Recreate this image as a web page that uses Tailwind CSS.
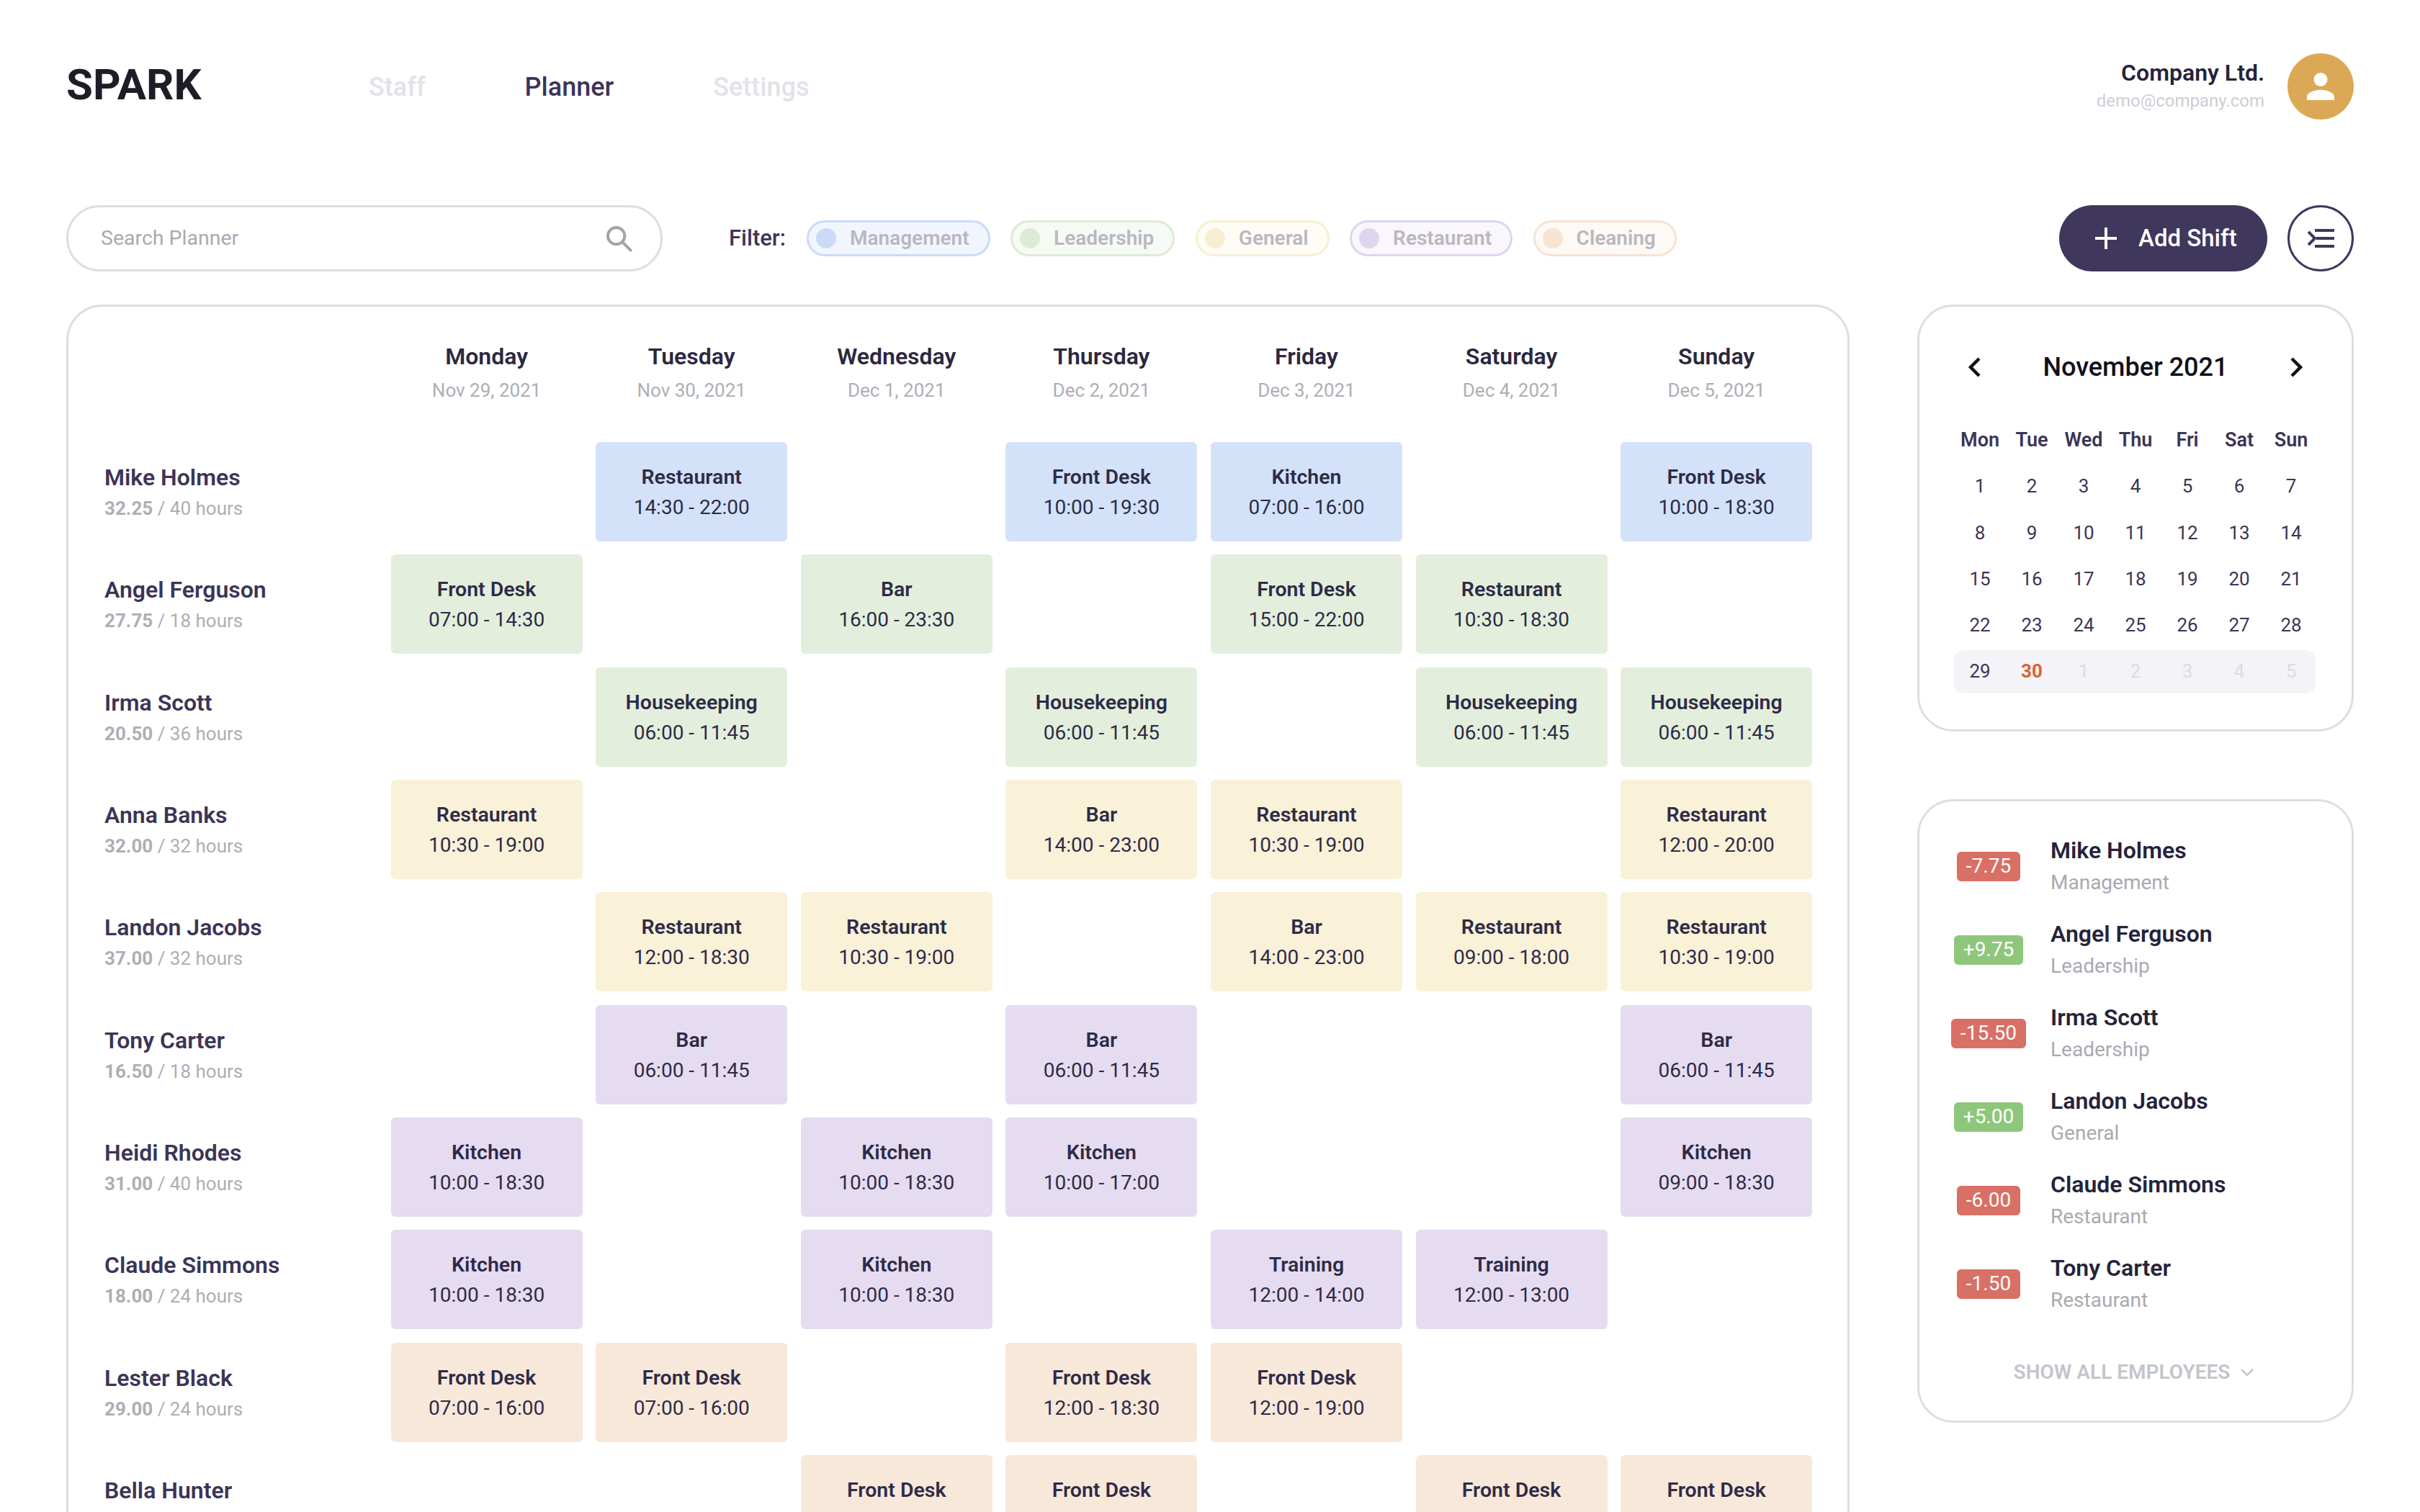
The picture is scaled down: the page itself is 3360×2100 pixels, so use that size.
<!DOCTYPE html>
<html lang="en">
<head>
  <meta charset="UTF-8" />
  <title>Spark - Planner</title>
  <script src="https://cdn.jsdelivr.net/npm/@tailwindcss/browser@4"></script>
</head>
<body class="bg-white h-[2100px] overflow-hidden font-[Roboto,sans-serif] text-[#3c3556]">

  <div class="px-[92px] pt-[74px]">
    <!-- header -->
    <header class="flex items-center h-[92px]">
      <div class="w-[420px] text-[60px] leading-none font-bold text-[#1f1c28] -mt-[4px]">SPARK</div>
      <nav class="flex gap-[138px] text-[36px] font-medium text-[#e2e2e8] mt-[1px]">
        <span>Staff</span>
        <span class="text-[#3c3556]">Planner</span>
        <span>Settings</span>
      </nav>
      <div class="ml-auto text-right mr-[32px]">
        <div class="text-[32px] leading-[40px] font-semibold text-[#26233a]">Company Ltd.</div>
        <div class="text-[24px] leading-[38px] text-[#cdcdd5]">demo@company.com</div>
      </div>
      <div class="w-[92px] h-[92px] rounded-full bg-[#dba955] flex items-center justify-center">
        <svg class="w-[54px] h-[54px]" viewBox="0 0 24 24" fill="#fff"><path d="M12 12a4.2 4.2 0 1 0 0-8.4 4.2 4.2 0 0 0 0 8.4zm0 2.1c-2.8 0-8.4 1.4-8.4 4.2v2.1h16.8v-2.1c0-2.8-5.600-4.200-8.400-4.200z"/></svg>
      </div>
    </header>

    <!-- toolbar -->
    <div class="flex items-center mt-[119px] h-[92px]">
      <div class="w-[828px] h-[92px] rounded-full border-[3px] border-[#dedede] flex items-center pl-[45px] pr-[38px] text-[28.5px] text-[#a9a9b0]">
        <span class="mt-[1px]">Search Planner</span>
        <svg class="ml-auto w-[40px] h-[40px]" viewBox="0 0 24 24" fill="none" stroke="#a3a3aa" stroke-width="2.400"><circle cx="10" cy="10" r="7"/><path d="M15 15l7 7" stroke-linecap="round"/></svg>
      </div>
      <span class="ml-[92px] text-[31px] font-medium text-[#3c3556]">Filter:</span>
      <div id="filters" class="flex gap-[28.5px] ml-[29px]"></div>
      <button class="ml-auto w-[289px] h-[92px] rounded-full bg-[#40375c] flex items-center pl-[48px] text-white text-[33px] font-medium">
        <svg class="w-[34px] h-[34px]" viewBox="0 0 34 34" stroke="#fff" stroke-width="4"><path d="M17 2v30M2 17h30"/></svg>
        <span class="ml-[28px]">Add Shift</span>
      </button>
      <button class="ml-[28px] w-[92px] h-[92px] rounded-full border-[3px] border-[#40375c] flex items-center justify-center">
        <svg class="w-[37px] h-[26px]" viewBox="0 0 37 26" fill="none" stroke="#40375c" stroke-width="4"><path d="M10 2h27M12 13h25M10 24h27"/><path d="M1 4l9 9-9 9"/></svg>
      </button>
    </div>

    <!-- main -->
    <div class="flex gap-[94px] mt-[46px]">
      <div class="w-[2476px] shrink-0 h-[1800px] rounded-[50px] border-[3px] border-[#dedede] pl-[50px]">
        <div id="planner" class="grid grid-cols-[379px_repeat(7,266px)] grid-rows-[169.67px] gap-x-[18.6px] gap-y-[18.33px] auto-rows-[138px]"></div>
      </div>

      <div class="w-[606px] shrink-0">
        <!-- calendar -->
        <div class="h-[593px] rounded-[50px] border-[3px] border-[#dedede] px-[48px] pt-[53px]">
          <div class="flex items-center justify-between px-[17px] h-[62px] text-[36px] font-medium text-[#111018]">
            <svg class="w-[22px] h-[30px]" viewBox="0 0 22 30" fill="none" stroke="#111018" stroke-width="4.500"><path d="M18 3L6 15l12 12"/></svg>
            <span>November 2021</span>
            <svg class="w-[22px] h-[30px]" viewBox="0 0 22 30" fill="none" stroke="#111018" stroke-width="4.500"><path d="M4 3l12 12L4 27"/></svg>
          </div>
          <div id="calendar" class="grid grid-cols-7 auto-rows-[64.3px] mt-[38px] text-center items-center text-[26px] relative"></div>
        </div>

        <!-- balances -->
        <div class="h-[866px] mt-[94px] rounded-[50px] border-[3px] border-[#dedede] pt-[31px] relative">
          <div id="balances"></div>
          <div class="absolute bottom-[46px] left-0 right-[4px] flex items-center justify-center gap-[14px] text-[28px] font-semibold text-[#c4c4cc]">
            <span>SHOW ALL EMPLOYEES</span>
            <svg class="w-[20px] h-[12px]" viewBox="0 0 20 12" fill="none" stroke="#c4c4cc" stroke-width="2.500"><path d="M2 2l8 8 8-8"/></svg>
          </div>
        </div>
      </div>
    </div>
  </div>

  <script>
    const filters = [
      ['Management', 'border-[#c9dbf7] bg-[#f1f6fe]', 'bg-[#c9dbf7]'],
      ['Leadership', 'border-[#dcecd4] bg-[#f6faf4]', 'bg-[#dcecd4]'],
      ['General', 'border-[#f8efd2] bg-[#fefcf5]', 'bg-[#f8efd2]'],
      ['Restaurant', 'border-[#e0d5ee] bg-[#f9f6fc]', 'bg-[#e0d5ee]'],
      ['Cleaning', 'border-[#f7e3d2] bg-[#fdf9f5]', 'bg-[#f7e3d2]'],
    ];
    document.getElementById('filters').innerHTML = filters.map(([name, chip, dot]) => `
      <div class="h-[50px] rounded-full border-[3px] ${chip} flex items-center pl-[10px] pr-[26px] text-[28px] font-semibold text-[#bab7bf]">
        <span class="w-[28px] h-[28px] rounded-full ${dot}"></span>
        <span class="ml-[19px]">${name}</span>
      </div>`).join('');

    const days = [
      ['Monday', 'Nov 29, 2021'], ['Tuesday', 'Nov 30, 2021'], ['Wednesday', 'Dec 1, 2021'],
      ['Thursday', 'Dec 2, 2021'], ['Friday', 'Dec 3, 2021'], ['Saturday', 'Dec 4, 2021'], ['Sunday', 'Dec 5, 2021'],
    ];

    const colors = {
      blue: 'bg-[#d3e2f9]', green: 'bg-[#e3efdc]', yellow: 'bg-[#f9f1d8]', purple: 'bg-[#e6dcf1]', peach: 'bg-[#f8e8da]',
    };

    const hk = ['Housekeeping', '06:00 - 11:45'];
    // last row runs off the bottom of the frame, so only its names show
    const rows = [
      ['Mike Holmes', '32.25', '40', 'blue', [0, ['Restaurant', '14:30 - 22:00'], 0, ['Front Desk', '10:00 - 19:30'], ['Kitchen', '07:00 - 16:00'], 0, ['Front Desk', '10:00 - 18:30']]],
      ['Angel Ferguson', '27.75', '18', 'green', [['Front Desk', '07:00 - 14:30'], 0, ['Bar', '16:00 - 23:30'], 0, ['Front Desk', '15:00 - 22:00'], ['Restaurant', '10:30 - 18:30'], 0]],
      ['Irma Scott', '20.50', '36', 'green', [0, hk, 0, hk, 0, hk, hk]],
      ['Anna Banks', '32.00', '32', 'yellow', [['Restaurant', '10:30 - 19:00'], 0, 0, ['Bar', '14:00 - 23:00'], ['Restaurant', '10:30 - 19:00'], 0, ['Restaurant', '12:00 - 20:00']]],
      ['Landon Jacobs', '37.00', '32', 'yellow', [0, ['Restaurant', '12:00 - 18:30'], ['Restaurant', '10:30 - 19:00'], 0, ['Bar', '14:00 - 23:00'], ['Restaurant', '09:00 - 18:00'], ['Restaurant', '10:30 - 19:00']]],
      ['Tony Carter', '16.50', '18', 'purple', [0, ['Bar', '06:00 - 11:45'], 0, ['Bar', '06:00 - 11:45'], 0, 0, ['Bar', '06:00 - 11:45']]],
      ['Heidi Rhodes', '31.00', '40', 'purple', [['Kitchen', '10:00 - 18:30'], 0, ['Kitchen', '10:00 - 18:30'], ['Kitchen', '10:00 - 17:00'], 0, 0, ['Kitchen', '09:00 - 18:30']]],
      ['Claude Simmons', '18.00', '24', 'purple', [['Kitchen', '10:00 - 18:30'], 0, ['Kitchen', '10:00 - 18:30'], 0, ['Training', '12:00 - 14:00'], ['Training', '12:00 - 13:00'], 0]],
      ['Lester Black', '29.00', '24', 'peach', [['Front Desk', '07:00 - 16:00'], ['Front Desk', '07:00 - 16:00'], 0, ['Front Desk', '12:00 - 18:30'], ['Front Desk', '12:00 - 19:00'], 0, 0]],
      ['Bella Hunter', '', '', 'peach', [0, 0, ['Front Desk', ''], ['Front Desk', ''], 0, ['Front Desk', ''], ['Front Desk', '']]],
    ];

    let html = '<div></div>';
    html += days.map(([d, date]) => `
      <div class="pt-[49px] text-center">
        <div class="text-[32px] leading-[40px] font-semibold text-[#2b2840]">${d}</div>
        <div class="text-[26px] leading-[34px] mt-[10px] text-[#aeaeb4]">${date}</div>
      </div>`).join('');
    rows.forEach(([name, done, total, color, shifts]) => {
      html += `
        <div class="flex flex-col justify-center">
          <div class="text-[32px] leading-[40px] font-semibold">${name}</div>
          <div class="h-[34px] text-[26px] leading-[34px] mt-[6px] text-[#aeaeb4]">${done ? `<span class="font-bold">${done}</span> / ${total} hours` : ''}</div>
        </div>`;
      shifts.forEach(s => {
        html += s ? `
          <div class="rounded-[6px] ${colors[color]} flex flex-col justify-center pt-[2px] text-center text-[28px] leading-[42px] text-[#2f2b47]">
            <div class="font-semibold text-[28.5px]">${s[0]}</div>
            <div class="h-[42px]">${s[1]}</div>
          </div>` : '<div></div>';
      });
    });
    document.getElementById('planner').innerHTML = html;

    // calendar
    let cal = ['Mon', 'Tue', 'Wed', 'Thu', 'Fri', 'Sat', 'Sun']
      .map(d => `<div class="font-semibold text-[27px]">${d}</div>`).join('');
    for (let i = 1; i <= 28; i++) cal += `<div class="text-[#3c3556] pt-[1px]">${i}</div>`;
    cal += `<div class="absolute left-0 right-[2px] bottom-[2px] h-[60px] rounded-[14px] bg-[#f3f3f8]"></div>`;
    cal += `<div class="relative">29</div><div class="relative font-bold text-[#dc6234]">30</div>`;
    for (let i = 1; i <= 5; i++) cal += `<div class="relative text-[#dcdce2]">${i}</div>`;
    document.getElementById('calendar').innerHTML = cal;

    // balances
    const balances = [
      ['-7.75', 'Mike Holmes', 'Management'],
      ['+9.75', 'Angel Ferguson', 'Leadership'],
      ['-15.50', 'Irma Scott', 'Leadership'],
      ['+5.00', 'Landon Jacobs', 'General'],
      ['-6.00', 'Claude Simmons', 'Restaurant'],
      ['-1.50', 'Tony Carter', 'Restaurant'],
    ];
    document.getElementById('balances').innerHTML = balances.map(([val, name, group]) => `
      <div class="flex items-center h-[116px]">
        <div class="w-[182px] shrink-0 flex justify-center pl-[10px] pt-[2px]">
          <span class="h-[41px] px-[13px] rounded-[6px] flex items-center text-white text-[28px] ${val[0] === '-' ? 'bg-[#d97065]' : 'bg-[#8ec77c]'}">${val}</span>
        </div>
        <div>
          <div class="text-[32px] leading-[40px] font-semibold text-[#26233a]">${name}</div>
          <div class="text-[28px] leading-[34px] mt-[8px] text-[#a9a9b0]">${group}</div>
        </div>
      </div>`).join('');
  </script>
</body>
</html>
